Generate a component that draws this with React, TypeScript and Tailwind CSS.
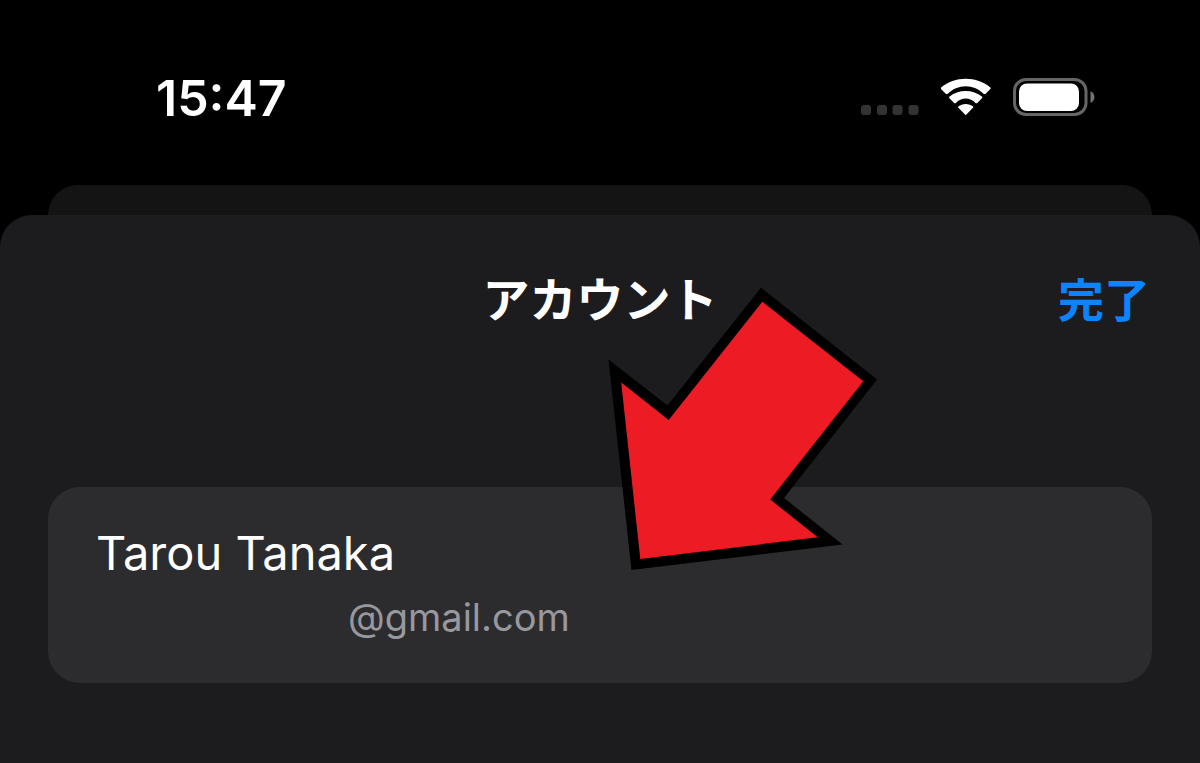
const fontStack =
  "font-[Inter,'Noto_Sans_CJK_JP',sans-serif]";

function CellularDots() {
  return (
    <svg width="58" height="38" viewBox="0 0 58 38" fill="#333333" aria-hidden="true">
      <rect x="0" y="27" width="10" height="10" rx="3" />
      <rect x="16" y="27" width="10" height="10" rx="3" />
      <rect x="31.500" y="27" width="10" height="10" rx="3" />
      <rect x="47.500" y="27" width="10" height="10" rx="3" />
    </svg>
  );
}

function WifiIcon() {
  return (
    <svg width="50" height="38" viewBox="0 0 50 38" fill="#ffffff" aria-hidden="true">
      <path d="M24.700 8.300C31.500 8.300 37.900 11.100 42.800 15.900L44.400 15.900L49.600 10.700L49.600 9.700C35.800 -2.200 13.600 -2.200 -0.200 9.700L-0.200 10.700L5 15.900L6.600 15.900C11.500 11.100 17.900 8.300 24.700 8.300Z" />
      <path d="M24.700 20.600C28.400 20.600 31.900 22.200 34.700 25.200L36 25.200L41.200 20L41.200 18.800C32 11 17.400 11 8.200 18.800L8.200 20L13.400 25.200L14.700 25.200C17.500 22.200 21 20.600 24.700 20.600Z" />
      <path d="M32.200 29.600L32.200 28.600C28 25.100 21.400 25.100 17.200 28.600L17.200 29.600L24.200 36.700C24.500 37 24.900 37 25.200 36.700Z" />
    </svg>
  );
}

function BatteryIcon() {
  return (
    <svg width="82" height="38" viewBox="0 0 82 38" aria-hidden="true">
      <rect x="1.500" y="1.500" width="71.500" height="35" rx="11.500" fill="none" stroke="#666666" strokeWidth="3" />
      <rect x="6" y="5.500" width="60" height="27.500" rx="8" fill="#ffffff" />
      <path d="M77.500 13.200V25C79.900 24 81.500 21.700 81.500 19.100C81.500 16.500 79.900 14.200 77.500 13.200Z" fill="#737373" />
    </svg>
  );
}

function Arrow() {
  return (
    <svg
      className="pointer-events-none absolute left-1/2 top-[288px] ml-2"
      width="270"
      height="283"
      viewBox="608 288 270 283"
      aria-hidden="true"
    >
      <path d="M761 287.700L877 379.600L784 498L842.500 544.500L631.500 570L608.500 359.500L667.500 405.500Z" fill="#000000" />
      <path d="M762.300 301.700L863.300 381.300L770.200 499.500L817.800 537.300L640.300 559L621.200 382.500L668.700 420Z" fill="#ed1c24" />
    </svg>
  );
}

export default function App() {
  return (
    <div className={`relative flex min-h-screen flex-col bg-black text-white ${fontStack}`}>
      <div className="flex items-start justify-between pl-[156px] pr-[105px] pt-[78px] pb-[67px]">
        <time className="text-[50px] font-semibold leading-[40px]">15:47</time>
        <div className="flex items-center gap-[22px]">
          <CellularDots />
          <WifiIcon />
          <BatteryIcon />
        </div>
      </div>

      <div className="mx-12 h-[30px] rounded-t-[30px] bg-[#141414]" />

      <main className="flex-1 rounded-t-[32px] bg-[#1c1c1e] px-12 pt-12">
        <header className="grid grid-cols-[1fr_auto_1fr] items-center leading-[74px]">
          <h1 className="col-start-2 text-[47px] font-bold">アカウント</h1>
          <button type="button" className="justify-self-end pr-[2px] text-[46px] font-bold text-[#0a84ff]">
            完了
          </button>
        </header>

        <section className="mt-[150px] rounded-[32px] bg-[#2c2c2e] px-12 pb-10 pt-9">
          <p className="text-[47px] leading-[60px]">Tarou Tanaka</p>
          <p className="pl-[252px] pt-2 text-[38px] leading-[52px] text-[#98989f]">@gmail.com</p>
        </section>
      </main>

      <Arrow />
    </div>
  );
}
